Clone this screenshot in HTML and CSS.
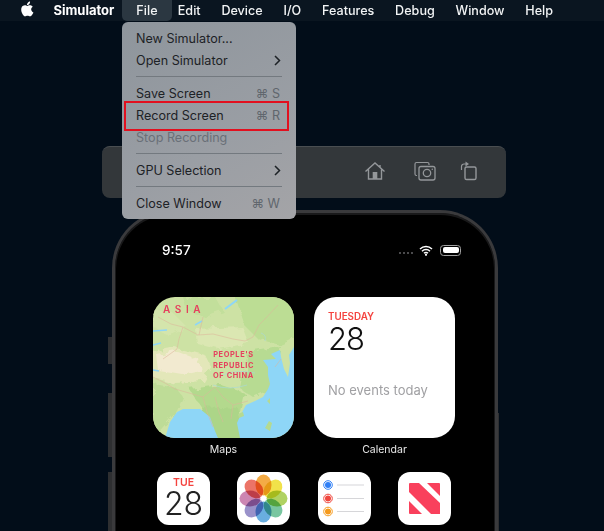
FILE: index.html
```html
<!DOCTYPE html>
<html lang="en">
<head>
    <meta charset="UTF-8">
    <meta name="viewport" content="width=device-width, initial-scale=1.0">
    <title>Simulator</title>
    <link rel="stylesheet" href="styles.css">
</head>
<body>
    <div class="menubar">
        <svg class="apple" viewBox="1 0 13 16" width="14" height="17">
            <path fill="#fff" d="M11.400 9c0-1.700 1.400-2.500 1.500-2.600-.8-1.200-2.100-1.400-2.500-1.400-1.100-.1-2.100.6-2.600.6-.6 0-1.400-.6-2.300-.6-1.200 0-2.300.7-2.900 1.700-1.200 2.100-.3 5.300.9 7 .6.800 1.300 1.800 2.200 1.700.9 0 1.200-.6 2.300-.6s1.400.6 2.300.6c1 0 1.600-.8 2.200-1.700.7-1 1-1.900 1-2-.1 0-1.900-.7-2.100-2.700zM9.700 3.800c.5-.6.800-1.400.7-2.300-.7 0-1.600.5-2.100 1.100-.5.500-.9 1.400-.8 2.200.8.100 1.700-.4 2.200-1z"/>
        </svg>
        <span class="menubar-item app-name">Simulator</span>
        <span class="menubar-item active">File</span>
        <span class="menubar-item">Edit</span>
        <span class="menubar-item">Device</span>
        <span class="menubar-item">I/O</span>
        <span class="menubar-item">Features</span>
        <span class="menubar-item">Debug</span>
        <span class="menubar-item">Window</span>
        <span class="menubar-item">Help</span>
    </div>

    <div class="toolbar">
        <svg class="tool" viewBox="0 0 22 20" width="22" height="20">
            <path d="M1.500 10.500 11 2l9.500 8.500M4.500 8.500V18h13V8.500M16 4v3" fill="none" stroke="#94979a" stroke-width="1.400"/>
            <rect x="8.700" y="11" width="4.600" height="7" fill="#94979a"/>
        </svg>
        <svg class="tool" viewBox="0 0 22 20" width="22" height="20">
            <path d="M3 14.500H2.500a1.500 1.500 0 0 1-1.500-1.500V3a1.500 1.500 0 0 1 1.500-1.500h11A1.500 1.500 0 0 1 15 3v1" fill="none" stroke="#94979a" stroke-width="1.200"/>
            <rect x="5" y="5.500" width="16" height="13.500" rx="2" fill="#33373a" stroke="#94979a" stroke-width="1.300"/>
            <circle cx="13" cy="12" r="3.700" fill="none" stroke="#94979a" stroke-width="1.300"/>
            <circle cx="18.300" cy="8.200" r=".8" fill="#94979a"/>
        </svg>
        <svg class="tool" viewBox="0 0 18 20" width="18" height="20">
            <rect x="5" y="6" width="11" height="12.500" rx="1.600" fill="none" stroke="#94979a" stroke-width="1.400"/>
            <path d="M1.500 9V5.500a2.500 2.500 0 0 1 2.500-2.500h2" fill="none" stroke="#94979a" stroke-width="1.200"/>
            <path d="M5.500 0.500 9 3 5.500 5.500z" fill="#94979a"/>
        </svg>
    </div>

    <div class="side-button btn-mute"></div>
    <div class="side-button btn-up"></div>
    <div class="side-button btn-down"></div>
    <div class="side-button btn-power"></div>

    <div class="phone">
        <div class="statusbar">
            <span class="clock">9:57</span>
            <div class="status-icons">
                <span class="signal"><i></i><i></i><i></i><i></i></span>
                <svg viewBox="0 0 14 11" width="14" height="11">
                    <path d="M1 4a8.500 8.500 0 0 1 12 0M3 6.200a5.600 5.600 0 0 1 8 0M5 8.300a2.800 2.800 0 0 1 4 0" fill="none" stroke="#fff" stroke-width="1.500"/>
                    <circle cx="7" cy="9.800" r="1.100" fill="#fff"/>
                </svg>
                <span class="battery"><b></b></span>
            </div>
        </div>

        <div class="widgets">
            <div class="widget-col">
                <div class="widget map">
                    <svg class="map-art" viewBox="0 0 141 141" preserveAspectRatio="none">
                        <defs>
                            <filter id="rough" x="-5%" y="-5%" width="110%" height="110%">
                                <feTurbulence type="fractalNoise" baseFrequency=".12" numOctaves="3" seed="4"/>
                                <feDisplacementMap in="SourceGraphic" scale="9"/>
                                <feGaussianBlur stdDeviation=".5"/>
                            </filter>
                        </defs>
                        <rect width="141" height="141" fill="#cde2a4"/>
                        <g filter="url(#rough)">
                            <path d="M80 -5h65v45l-18 8-22-6-14-14z" fill="#bcdd94"/>
                            <path d="M30 0 62 0 70 14 52 20 34 14z" fill="#c2df9b"/>
                            <path d="M0 12 20 16 34 30 14 38 0 30z" fill="#d4e5ac"/>
                            <path d="M95 55 128 50 122 70 118 92 100 100 88 92z" fill="#b7db92"/>
                            <path d="M42 32 90 30 96 46 66 52 44 46z" fill="#dbe7b2"/>
                            <path d="M-4 56 22 50 52 58 58 70 50 84 22 86 -4 80z" fill="#e3e7b9"/>
                            <path d="M4 58 24 54 46 62 48 74 30 78 6 74z" fill="#f2ead0"/>
                            <path d="M0 86 22 90 30 100 24 114 10 130 0 141z" fill="#bedc97"/>
                            <path d="M36 92 68 88 92 96 88 116 70 122 48 110z" fill="#b3d98d"/>
                            <path d="M48 110 86 112 92 145 58 145z" fill="#acd588"/>
                        </g>
                        <path d="M12 141 17 125 24 115 30 112 47 112 57 120 62 134 65 141z" fill="#8ed6f7"/>
                        <path d="M87 141 84 126 88 117 93 108 102 104 110 100 115 92 117 87 115 78 115 70 110 63 123 62 118 57 127 53 128 60 131 72 135 80 137 66 136 58 141 50V141z" fill="#8ed6f7"/>
                        <path d="M85 117 90 115 91 119 86 121zM112 131 116 124 119 126 117 134zM114 104 117 101 117 107z" fill="#b5da90"/>
                        <path d="M0 34 14 33M0 48 8 46M42 28 49 24M0 73 6 74" stroke="#8ed6f7" stroke-width="1.500" fill="none"/>
                        <path d="M72 12 84 3" stroke="#8ed6f7" stroke-width="2" fill="none"/>
                        <path d="M108 36 q6 2 4 8M70 78 q14 -6 32 -2M60 88 q16 6 34 0" stroke="#a8d9de" stroke-width=".6" fill="none"/>
                        <path d="M5 20 18 27 30 30 45 38 60 37 80 42 92 44 100 40 106 28 112 22 125 8M30 30 26 42 24 52 10 62M0 80 12 86 22 92 36 96 50 100 56 95 62 90 70 100 80 108 95 104M62 100 66 115 70 125M50 100 54 115 60 130M80 108 78 122M122 70 128 62M46 38 50 20" stroke="#dcb59b" stroke-width=".55" fill="none"/>
                    </svg>
                    <span class="map-asia">ASIA</span>
                    <span class="map-china">PEOPLE'S<br>REPUBLIC<br>OF CHINA</span>
                </div>
                <span class="app-label">Maps</span>
            </div>
            <div class="widget-col">
                <div class="widget calendar">
                    <span class="cal-day">TUESDAY</span>
                    <span class="cal-date">28</span>
                    <span class="cal-none">No events today</span>
                </div>
                <span class="app-label">Calendar</span>
            </div>
        </div>

        <div class="apps">
            <div class="app-icon cal-icon">
                <span class="cal-icon-day">TUE</span>
                <span class="cal-icon-date">28</span>
            </div>
            <div class="app-icon">
                <svg viewBox="0 0 53 53" width="53" height="53">
                    <g class="petals">
                        <ellipse cx="26.500" cy="13" rx="8" ry="10.500" fill="#f4ab45"/>
                        <ellipse cx="26.500" cy="13" rx="8" ry="10.500" fill="#f1e24a" transform="rotate(45 26.500 26.500)"/>
                        <ellipse cx="26.500" cy="13" rx="8" ry="10.500" fill="#b0d262" transform="rotate(90 26.500 26.500)"/>
                        <ellipse cx="26.500" cy="13" rx="8" ry="10.500" fill="#79c6a0" transform="rotate(135 26.500 26.500)"/>
                        <ellipse cx="26.500" cy="13" rx="8" ry="10.500" fill="#69aee0" transform="rotate(180 26.500 26.500)"/>
                        <ellipse cx="26.500" cy="13" rx="8" ry="10.500" fill="#9a92ca" transform="rotate(225 26.500 26.500)"/>
                        <ellipse cx="26.500" cy="13" rx="8" ry="10.500" fill="#cc86b2" transform="rotate(270 26.500 26.500)"/>
                        <ellipse cx="26.500" cy="13" rx="8" ry="10.500" fill="#ec7467" transform="rotate(315 26.500 26.500)"/>
                    </g>
                    <circle cx="26.500" cy="26.500" r="1.300" fill="#fff"/>
                </svg>
            </div>
            <div class="app-icon">
                <svg viewBox="0 0 53 53" width="53" height="53">
                    <circle cx="10" cy="13" r="4.300" fill="none" stroke="#2f7ff6" stroke-width="1"/>
                    <circle cx="10" cy="13" r="3" fill="#2f7ff6"/>
                    <circle cx="10" cy="26.500" r="4.300" fill="none" stroke="#f0473e" stroke-width="1"/>
                    <circle cx="10" cy="26.500" r="3" fill="#f0473e"/>
                    <circle cx="10" cy="39.500" r="4.300" fill="none" stroke="#f59a1c" stroke-width="1"/>
                    <circle cx="10" cy="39.500" r="3" fill="#f59a1c"/>
                    <path d="M19 13h27M19 26.500h27M19 39.500h27" stroke="#d6d6d9" stroke-width="1.200"/>
                </svg>
            </div>
            <div class="app-icon">
                <svg viewBox="0 0 53 53" width="53" height="53">
                    <path d="M12 11h9l21 20v11h-9L11 20v-8a1 1 0 0 1 1-1z" fill="#f9405c"/>
                    <path d="M29 11h12a1 1 0 0 1 1 1v12z" fill="#f9405c"/>
                    <path d="M11 29l13 13H12a1 1 0 0 1-1-1z" fill="#f9405c"/>
                </svg>
            </div>
        </div>
    </div>

    <div class="menu">
        <div class="menu-row"><span>New Simulator...</span></div>
        <div class="menu-row">
            <span>Open Simulator</span>
            <svg class="chevron" viewBox="0 0 7 11" width="7" height="11"><path d="M1 1l4.500 4.500L1 10" fill="none" stroke="#1d2226" stroke-width="1.500"/></svg>
        </div>
        <div class="menu-sep"></div>
        <div class="menu-row"><span>Save Screen</span><span class="shortcut">⌘ S</span></div>
        <div class="menu-row"><span>Record Screen</span><span class="shortcut">⌘ R</span></div>
        <div class="menu-row disabled"><span>Stop Recording</span></div>
        <div class="menu-sep"></div>
        <div class="menu-row">
            <span>GPU Selection</span>
            <svg class="chevron" viewBox="0 0 7 11" width="7" height="11"><path d="M1 1l4.500 4.500L1 10" fill="none" stroke="#1d2226" stroke-width="1.500"/></svg>
        </div>
        <div class="menu-sep"></div>
        <div class="menu-row"><span>Close Window</span><span class="shortcut">⌘ W</span></div>
        <div class="callout"></div>
    </div>
</body>
</html>
```

FILE: styles.css
```css
* {
    box-sizing: border-box;
}
html, body {
    margin: 0;
    height: 100%;
}
body {
    position: relative;
    width: 604px;
    height: 531px;
    overflow: hidden;
    background: #020d19;
    font-family: Inter, "Liberation Sans", sans-serif;
    color: #fff;
}

/* top bar */
.menubar {
    display: flex;
    align-items: center;
    height: 21px;
    padding-left: 20px;
    background: #0a1520;
    font-size: 12.6px;
    font-weight: 500;
    color: #f2f4f5;
}
.apple {
    margin: -5px 9px 0 0;
}
.menubar-item {
    padding: 0 10.400px;
    line-height: 21px;
}
.app-name {
    font-size: 13px;
    font-weight: 700;
    color: #fff;
    padding-right: 8px;
}
.menubar-item.active {
    width: 50px;
    padding: 0 0 0 14px;
    margin-right: -5px;
    background: #2b3741;
    border-radius: 0 0 5px 5px;
}

/* File menu */
.menu {
    position: absolute;
    left: 122px;
    top: 22px;
    width: 174px;
    height: 197px;
    padding: 5px 14px;
    background: linear-gradient(150deg, #8e959c, #9a9ea4 60%, #a4a4a7);
    border-radius: 6px;
    color: #1d2226;
    font-size: 12.6px;
}
.menu-row {
    display: flex;
    align-items: center;
    justify-content: space-between;
    height: 22px;
}
.menu-row.disabled {
    color: #6a7078;
}
.shortcut {
    color: #60666d;
    padding-right: 2px;
}
.chevron {
    margin-right: 1px;
}
.menu-sep {
    height: 1px;
    margin: 5px 0;
    background: #73797f;
}
.callout {
    position: absolute;
    left: 2px;
    top: 79px;
    width: 165px;
    height: 30px;
    border: 2px solid #e2101f;
}

/* simulator window */
.toolbar {
    position: absolute;
    left: 102px;
    top: 146px;
    width: 404px;
    height: 52px;
    padding: 14px 28px 0 0;
    display: flex;
    justify-content: flex-end;
    gap: 28px;
    background: #33373a;
    border-top: 1px solid #4a4e51;
    border-radius: 8px;
}
.tool {
    display: block;
}
.tool:last-child {
    margin-left: -4px;
}
.side-button {
    position: absolute;
    background: #2e2f31;
    width: 5px;
    left: 108px;
}
.btn-mute {
    top: 337px;
    height: 27px;
}
.btn-up {
    top: 393px;
    height: 64px;
}
.btn-down {
    top: 472px;
    height: 59px;
}
.btn-power {
    left: 494px;
    top: 413px;
    height: 118px;
}
.phone {
    position: absolute;
    left: 112px;
    top: 210px;
    width: 386px;
    height: 321px;
    background: #000;
    border: 3px solid #3a3a3c;
    border-bottom: none;
    border-radius: 58px 58px 0 0;
    box-shadow: inset 0 1px 0 1px #19191a;
    padding: 1px 38px 0;
}

/* status bar */
.statusbar {
    display: flex;
    justify-content: space-between;
    align-items: center;
    height: 20px;
    margin: 26px 0 0 9px;
}
.clock {
    font-size: 13.500px;
    font-weight: 500;
}
.status-icons {
    display: flex;
    align-items: center;
    gap: 6px;
    margin-right: -4px;
}
.signal {
    display: flex;
    gap: 2px;
    margin-top: 6px;
}
.signal i {
    width: 2px;
    height: 2px;
    background: #636366;
    border-radius: 50%;
}
.battery {
    display: block;
    width: 21px;
    height: 11px;
    padding: 1.500px;
    border: 1px solid #a0a0a0;
    border-radius: 3.500px;
    margin-left: 1px;
}
.battery b {
    display: block;
    height: 100%;
    background: #fff;
    border-radius: 2px;
}

/* widgets */
.widgets {
    display: flex;
    gap: 20px;
    margin-top: 37px;
}
.widget-col {
    display: flex;
    flex-direction: column;
    align-items: center;
    width: 141px;
}
.widget {
    position: relative;
    width: 141px;
    height: 141px;
    border-radius: 22px;
    overflow: hidden;
}
.app-label {
    margin-top: 5px;
    font-size: 10.500px;
    line-height: 14px;
    color: #e8e8e8;
}
.map-art {
    display: block;
    width: 141px;
    height: 141px;
}
.map-asia {
    position: absolute;
    left: 10px;
    top: 6px;
    font-size: 10px;
    font-weight: 600;
    letter-spacing: 4.600px;
    color: #e5405e;
}
.map-china {
    position: absolute;
    left: 60px;
    top: 53px;
    font-size: 7.400px;
    font-weight: 700;
    line-height: 10.500px;
    letter-spacing: .6px;
    color: #e5405e;
    text-align: center;
}
.calendar {
    display: flex;
    flex-direction: column;
    padding: 13px 14px;
    background: #fff;
}
.cal-day {
    font-size: 9.800px;
    font-weight: 600;
    line-height: 13px;
    color: #f4433f;
}
.cal-date {
    margin-top: 4px;
    font-size: 31px;
    font-weight: 300;
    letter-spacing: -1px;
    line-height: 23px;
    color: #111;
}
.cal-none {
    margin-top: 32px;
    font-size: 13px;
    line-height: 16px;
    color: #a0a0a3;
}

/* app row */
.apps {
    display: flex;
    gap: 27.300px;
    margin-top: 15px;
    padding-left: 4px;
}
.app-icon {
    flex: none;
    width: 53px;
    height: 53px;
    background: #fff;
    border-radius: 12px;
    overflow: hidden;
}
.app-icon svg {
    display: block;
}
.petals ellipse {
    mix-blend-mode: multiply;
}
.cal-icon {
    display: flex;
    flex-direction: column;
    align-items: center;
}
.cal-icon-day {
    margin-top: 5px;
    font-size: 10.500px;
    font-weight: 600;
    line-height: 11px;
    color: #f4433f;
}
.cal-icon-date {
    margin-top: 4px;
    font-size: 32px;
    font-weight: 300;
    line-height: 23px;
    color: #222;
}
```
